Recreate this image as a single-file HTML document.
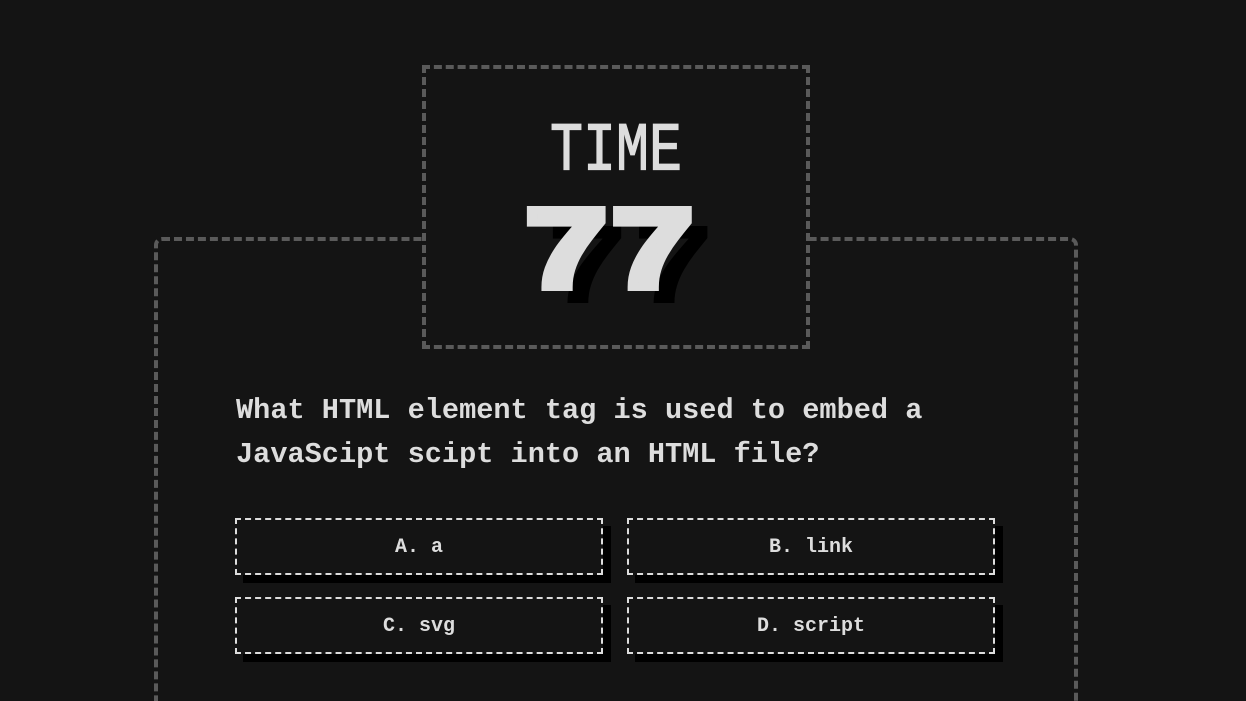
<!DOCTYPE html>
<html><head><style>
html,body{margin:0;padding:0;background:#141414;width:1246px;height:701px;overflow:hidden;font-family:"Liberation Mono",monospace;color:#ddd}
.wrap{position:relative;width:1246px;height:701px;overflow:hidden}
.outer{position:absolute;left:154px;top:237px;width:916px;height:470px;border:4px dashed #5a5a5a;border-bottom:none;border-radius:8px 8px 0 0}
.timer{position:absolute;left:422px;top:65px;width:380px;height:276px;border:4px dashed #5a5a5a;background:#141414}
.time{position:absolute;left:0;width:100%;text-align:center;font-size:55px;line-height:1;color:#ddd;transform:scaleY(1.25);transform-origin:0 0;top:48px;letter-spacing:0px;-webkit-text-stroke:1px #ddd}
.num{position:absolute;left:-4px;width:100%;top:124px;text-align:center;font-size:112px;font-weight:bold;line-height:1;color:#ddd;text-shadow:16px 16px 0 #000;font-family:"Liberation Sans",sans-serif;letter-spacing:4px;-webkit-text-stroke:8px #ddd;transform:scaleX(1.3);transform-origin:50% 0}
.q{position:absolute;left:236px;top:389px;font-size:28.6px;line-height:44px;font-weight:bold;color:#ddd;white-space:pre}
.b{position:absolute;width:364px;height:53px;border:2px dashed #ddd;box-shadow:8px 8px 0 #000;background:#141414;text-align:center;line-height:56px;font-size:20px;font-weight:bold;color:#ddd}
</style></head><body><div class="wrap">
<div class="outer"></div>
<div class="timer"><div class="time">TIME</div><div class="num">77</div></div>
<div class="q">What HTML element tag is used to embed a
JavaScipt scipt into an HTML file?</div>
<div class="b" style="left:235px;top:518px">A. a</div>
<div class="b" style="left:627px;top:518px">B. link</div>
<div class="b" style="left:235px;top:597px">C. svg</div>
<div class="b" style="left:627px;top:597px">D. script</div>
</div></body></html>
